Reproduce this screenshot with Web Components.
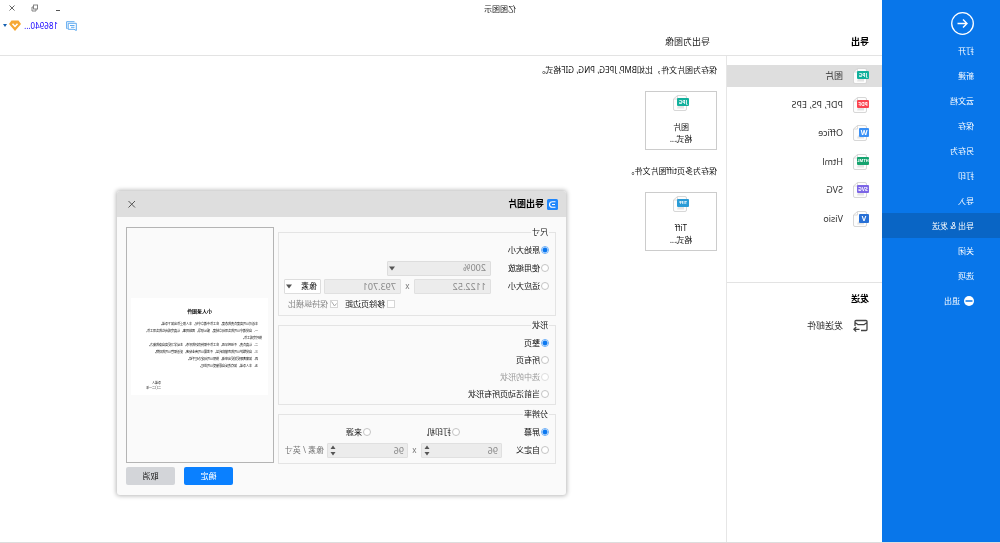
<!DOCTYPE html>
<html lang="zh-CN">
<head>
<meta charset="utf-8">
<title>亿图图示</title>
<style>
  body { margin: 0; background: #fff; font-family: "Noto Sans", "Noto Sans CJK SC", sans-serif; font-size: 8px; line-height: 12px; color: #111; }
</style>
</head>
<body>
<app-window></app-window>
<script>
const BASE = `<style>
  :host { display: block; box-sizing: border-box; }
  :host([hidden]) { display: none; }
  *, *::before { box-sizing: border-box; }
  button, input, select { font: inherit; color: inherit; margin: 0; padding: 0; border: 0; background: none; outline: 0; text-align: left; }
  h1, h2, h3, p, ul { margin: 0; padding: 0; font-size: inherit; font-weight: inherit; list-style: none; }
  a { color: inherit; text-decoration: none; }
  svg { display: block; flex: none; }
</style>`;

function define(name, render) {
  customElements.define(name, class extends HTMLElement {
    connectedCallback() {
      if (this.shadowRoot) return;
      const root = this.attachShadow({ mode: 'open' });
      const tpl = document.createElement('template');
      tpl.innerHTML = BASE + render(this);
      root.appendChild(tpl.content.cloneNode(true));
    }
  });
}
const attr = (el, n, d = '') => el.getAttribute(n) ?? d;

/* Sidebar entry */
define('nav-item', el => `<style>
  :host { height: 25px; color: #fff; }
  :host([active]) { background: #0965c5; }
  a { display: flex; align-items: center; gap: 4px; height: 100%; padding-left: 26px; }
</style><a href="#"><slot name="icon"></slot><slot></slot></a>`);

define('side-nav', () => `<style>
  :host { background: #0876ea; padding-top: 12px; }
  .back { display: block; width: 23px; height: 23px; margin: 0 0 3px 26px; }
</style>
<button class="back" aria-label="返回"><svg width="23" height="23" viewBox="0 0 23 23" fill="none" stroke="#fff" stroke-width="1.3"><circle cx="11.5" cy="11.5" r="10.8"/><path d="M16.5 11.5H7M11 7.5l-4 4 4 4" stroke-width="1.4"/></svg></button>
<nav>
  <nav-item>打开</nav-item><nav-item>新建</nav-item><nav-item>云文档</nav-item><nav-item>保存</nav-item>
  <nav-item>另存为</nav-item><nav-item>打印</nav-item><nav-item>导入</nav-item><nav-item active>导出 &amp; 发送</nav-item>
  <nav-item>关闭</nav-item><nav-item>选项</nav-item>
  <nav-item><svg slot="icon" width="10" height="10" viewBox="0 0 10 10"><circle cx="5" cy="5" r="5" fill="#fff"/><path d="M1.500 5h7" stroke="#0876ea" stroke-width="1.5"/></svg>退出</nav-item>
</nav>`);

/* Page with a coloured format badge */
define('file-icon', el => {
  const label = attr(el, 'label'), color = attr(el, 'color');
  const small = label.length === 1;
  const w = small ? 10 : 12, y = 3, h = small ? 9 : 8;
  const size = small ? 7 : label.length > 3 ? 4 : 5;
  return `<style>:host { width: 16px; height: 16px; } text { font-family: "Open Sans", sans-serif; font-weight: 700; }</style>
  <svg width="16" height="16" viewBox="0 0 16 16">
    <path d="M2.5 2q0-1.5 1.5-1.5h7.500l4 3.500V14q0 1.500-1.500 1.500H4Q2.500 15.500 2.500 14Z" fill="#fdfdfd" stroke="#d3d3d3" stroke-width=".9"/>
    <path d="M11.500.5V4H15.500" fill="none" stroke="#d3d3d3" stroke-width=".8"/>
    <path d="M5 13.500v-3h6l1 3z" fill="#e4e4e4"/>
    <rect x="0" y="${y}" width="${w}" height="${h}" rx="1" fill="${color}"/>
    <text x="${w / 2}" y="${y + h / 2 + size * .36}" font-size="${size}" text-anchor="middle" fill="#fff">${label}</text>
  </svg>`;
});

define('list-entry', () => `<style>
  :host { height: 22px; font-size: 9px; color: #333; }
  :host([selected]) { background: #dedede; }
  a { display: flex; align-items: center; gap: 10px; height: 100%; padding-left: 13px; }
</style><a href="#"><slot name="icon"></slot><slot></slot></a>`);

define('export-list', () => `<style>
  :host { border-right: 1px solid #e6e6e6; }
  .formats { display: flex; flex-direction: column; justify-content: space-between; height: 165px; margin: 9px 0 52px; }
  .send { border-top: 1px solid #e3e3e3; padding-top: 10px; }
  h2 { font-size: 9px; font-weight: 700; color: #000; padding-left: 13px; margin-bottom: 10px; }
</style>
<div class="formats">
  <list-entry selected><file-icon slot="icon" label="JPG" color="#12b09c"></file-icon>图片</list-entry>
  <list-entry><file-icon slot="icon" label="PDF" color="#fb4450"></file-icon>PDF, PS, EPS</list-entry>
  <list-entry><file-icon slot="icon" label="W" color="#3b90f5"></file-icon>Office</list-entry>
  <list-entry><file-icon slot="icon" label="HTML" color="#15a36f"></file-icon>Html</list-entry>
  <list-entry><file-icon slot="icon" label="SVG" color="#7c66e6"></file-icon>SVG</list-entry>
  <list-entry><file-icon slot="icon" label="V" color="#2870d6"></file-icon>Visio</list-entry>
</div>
<section class="send">
  <h2>发送</h2>
  <list-entry><svg slot="icon" width="16" height="14" viewBox="0 0 16 14" fill="none" stroke="#444" stroke-width="1.300"><path d="M8 11.500H3Q2 11.500 2 10.500V2.500Q2 1.500 3 1.500H13Q14 1.500 14 2.500V7M2 3.500l3 2.200h6L14 3.500M9.500 10.300H15M12.800 8l2.300 2.300-2.300 2.300"/></svg>发送邮件</list-entry>
</section>`);

define('format-card', () => `<style>
  :host { width: 72px; height: 59px; margin: 15px 0; }
  button { display: flex; flex-direction: column; align-items: center; width: 100%; height: 100%; padding-top: 3px; border: 1px solid #ccc; background: #fff; }
  .name { margin-top: 10px; }
</style><button><slot name="icon"></slot><span class="name"><slot></slot></span><span>格式...</span></button>`);

define('format-panel', () => `<style>:host { padding: 8px 0 0 9px; }</style>
<p>保存为图片文件，比如BMP, JPEG, PNG, GIF格式。</p>
<format-card><file-icon slot="icon" label="JPG" color="#12b09c"></file-icon>图片</format-card>
<p>保存为多页tiff图片文件。</p>
<format-card><file-icon slot="icon" label="TIFF" color="#2a9bd6"></file-icon>Tiff</format-card>`);

define('window-header', () => `<style>
  :host { border-bottom: 1px solid #e3e3e3; }
  .title { display: grid; grid-template-columns: 1fr 118px; align-items: center; height: 17px; text-align: center; color: #222; }
  .controls { display: flex; justify-content: flex-end; gap: 13px; padding: 0 7px 2px 0; }
  .user { display: flex; justify-content: flex-end; align-items: center; height: 17px; padding-right: 3px; color: #1500ff; }
  .name { margin: 0 3px 0 8px; width: 34px; }
  .caret { margin-left: 2px; }
  .heads { display: grid; grid-template-columns: 159px 1fr; height: 21px; padding-left: 13px; font-size: 9px; line-height: 16px; color: #222; }
  h2 { font-weight: 700; color: #000; }
</style>
<div class="title"><h1>亿图图示</h1>
  <div class="controls">
    <button aria-label="最小化"><svg width="10" height="10" viewBox="0 0 10 10" stroke="#555"><path d="M3 7.500h4"/></svg></button>
    <button aria-label="还原"><svg width="10" height="10" viewBox="0 0 10 10" fill="none" stroke="#777" stroke-width=".9"><rect x="2.500" y="2" width="4" height="4"/><path d="M4 6V8H8V4H6.500"/></svg></button>
    <button aria-label="关闭"><svg width="10" height="10" viewBox="0 0 10 10" stroke="#555" stroke-width=".9"><path d="M2.500 2.500l5 5M7.500 2.500l-5 5"/></svg></button>
  </div>
</div>
<div class="user">
  <svg width="11" height="10" viewBox="0 0 11 10" fill="none" stroke="#4da0ee" stroke-width=".9"><path d="M2.500.7H10.400V7.500H9.500M.7 2.300H8.800V8.300H3L.7 9.500ZM2.500 4.500H7M2.500 6.300H6"/></svg>
  <a class="name" href="#">186940...</a>
  <svg width="12" height="11" viewBox="0 0 12 11"><path d="M2.500.5H9.500L12 4 6 11 0 4Z" fill="#f6a833"/><path d="M3.500 3.800L6 6.500 8.500 3.800" fill="none" stroke="#fff" stroke-width="1.500"/></svg>
  <svg class="caret" width="4" height="3" viewBox="0 0 4 3"><path d="M0 0h4L2 3z" fill="#1560b0"/></svg>
</div>
<div class="heads"><h2>导出</h2><div>导出为图像</div></div>`);

/* Form parts of the dialog */
define('radio-option', el => `<style>
  label { display: flex; align-items: center; gap: 1px; white-space: nowrap; }
  :host([disabled]) { color: #999; }
  input { appearance: none; width: 8px; height: 8px; border: 1px solid #c4c4c4; border-radius: 50%; background: #fff; flex: none; }
  input:checked { border-color: #6aaef8; background: radial-gradient(circle, #0b78f0 2px, #fff 3px); }
  input:disabled { border-color: #ddd; }
</style><label><input type="radio" name="${attr(el, 'group')}" ${el.hasAttribute('checked') ? 'checked' : ''} ${el.hasAttribute('disabled') ? 'disabled' : ''}><slot></slot></label>`);

define('check-option', el => `<style>
  label { display: flex; align-items: center; gap: 2px; white-space: nowrap; }
  :host([disabled]) { color: #888; }
  input { appearance: none; width: 8px; height: 8px; border: 1px solid #d6d6d6; background: #fff; }
  .box { position: relative; display: flex; }
  svg { position: absolute; inset: 0; }
</style><label><span class="box"><input type="checkbox" ${el.hasAttribute('checked') ? 'checked' : ''} ${el.hasAttribute('disabled') ? 'disabled' : ''}>${
  el.hasAttribute('checked') ? '<svg width="8" height="8" viewBox="0 0 8 8" fill="none" stroke="#aaa"><path d="M1.500 3.500l2 2.500 3-4.500"/></svg>' : ''}</span><slot></slot></label>`);

define('value-field', el => `<style>
  :host { height: 15px; font-size: 9px; color: #888; position: relative; }
  input { width: 100%; height: 100%; padding-left: 4px; border: 1px solid #e0e0e0; background: #ececec; border-radius: 1px; }
  :host([spin]) input { padding-left: 3px; }
  svg { position: absolute; right: 3px; top: 2px; }
</style><input value="${attr(el, 'value')}" aria-label="${attr(el, 'label')}" disabled>${
  el.hasAttribute('spin') ? '<svg width="6" height="11" viewBox="0 0 6 11" fill="#555"><path d="M.5 4L3 .5 5.500 4zM.5 7L3 10.500 5.500 7z"/></svg>' : ''}`);

define('select-field', el => `<style>
  :host { height: 15px; position: relative; color: #111; }
  :host([disabled]) { color: #888; font-size: 9px; }
  select { appearance: none; width: 100%; height: 100%; padding-left: 3px; border: 1px solid #ddd; background: #fff; opacity: 1; border-radius: 1px; }
  :host([disabled]) select { background: #ececec; padding-left: 4px; }
  svg { position: absolute; right: 2px; top: 5px; }
</style><select aria-label="${attr(el, 'label')}" ${el.hasAttribute('disabled') ? 'disabled' : ''}><option>${attr(el, 'value')}</option></select>
<svg width="6" height="5" viewBox="0 0 6 5"><path d="M0 .5h6L3 4.500z" fill="#555"/></svg>`);

define('group-box', el => `<style>
  fieldset { margin: 0; min-width: 0; border: 1px solid #e4e4e4; padding: 4px 5px 2px 6px; }
  legend { padding: 0 1px; line-height: 10px; height: 10px; }
</style><fieldset><legend>${attr(el, 'legend')}</legend><slot></slot></fieldset>`);

define('document-preview', () => `<style>
  :host { height: 236px; border: 1px solid #b4b4b4; padding: 70px 4px 0 5px; font-size: 3px; line-height: 7px; color: #000; }
  article { background: #fff; height: 97px; padding: 9px 6px 0; white-space: nowrap; }
  h3 { font-size: 5px; font-weight: 700; text-align: center; line-height: 8px; margin-bottom: 6px; }
  .in { padding-left: 4px; }
  footer { line-height: 5px; padding: 11px 0 0 101px; }
</style><article>
<h3>小人录图件</h3>
<p class="in">本着对公司高度负责的态度，在工作中遵章守纪，本人郑重作出如下承诺。</p>
<p class="in">一、自觉遵守公司的各项规章制度，服从领导，团结同事，认真完成岗位的各项工作，</p>
<p>按时完成工作。</p>
<p class="in">二、认真负责，不迟到早退，在工作中保持良好的形象，主动学习提高自身的能力。</p>
<p class="in">三、自觉维护公司的声誉和利益，不泄露公司商业秘密，妥善保管公司的财物。</p>
<p class="in">四、如需离职提前提出申请，按照公司规定办理手续。</p>
<p class="in">五、本人承诺，如有违反自愿接受公司处理。</p>
<footer>承诺人<br>二〇二一年</footer>
</article>`);

define('export-dialog', () => `<style>
  :host { background: #fafafa; border-radius: 3px; box-shadow: 0 0 4px 1px rgba(0,0,0,.28); overflow: hidden; padding-bottom: 10px; }
  header { display: flex; align-items: center; gap: 3px; height: 26px; padding: 0 10px 0 8px; background: #dedede; font-size: 9px; color: #000; }
  h2 { flex: 1; font-weight: 700; }
  .body { display: grid; grid-template-columns: 1fr 148px; gap: 4px; padding: 10px 9px 0 10px; }
  .groups { display: flex; flex-direction: column; gap: 4px; }
  .row { display: flex; align-items: center; height: 18px; }
  .pages .row { height: 17px; }
  .resolution .row:last-child { margin-bottom: 2px; }
  .lead { width: 58px; }
  .lead.short { width: 47px; }
  .by { width: 13px; text-align: center; color: #777; }
  .num { width: 77px; }
  .zoom { width: 104px; }
  .unit { width: 37px; margin-left: 3px; }
  .checks { justify-content: flex-end; gap: 7px; padding-right: 4px; }
  .sources { display: grid; grid-template-columns: 89px 89px 1fr; }
  .spin { width: 81px; }
  .per { margin-left: 3px; color: #777; white-space: nowrap; }
  .actions { display: flex; justify-content: flex-end; gap: 9px; margin-top: 4px; }
  .actions button { width: 49px; height: 18px; border-radius: 2px; background: #d3d5d9; text-align: center; }
  .actions .ok { background: #0a80ff; color: #fff; }
</style>
<header>
  <svg width="11" height="11" viewBox="0 0 11 11"><rect width="11" height="11" rx="1.500" fill="#1f86fb"/><path d="M2.500 2.700H5.500Q8.500 2.700 8.500 5.500T5.500 8.300H2.500M3 5.500H6" fill="none" stroke="#fff" stroke-width="1.100"/></svg>
  <h2>导出图片</h2>
  <button aria-label="关闭"><svg width="10" height="10" viewBox="0 0 10 10" stroke="#555"><path d="M2 2l6.500 6.500M8.500 2L2 8.500"/></svg></button>
</header>
<div class="body">
  <div class="groups">
    <group-box legend="尺寸">
      <div class="row"><radio-option checked>原始大小</radio-option></div>
      <div class="row"><radio-option class="lead">使用缩放</radio-option><select-field class="zoom" label="缩放" value="200%" disabled></select-field></div>
      <div class="row"><radio-option class="lead">适应大小</radio-option><value-field class="num" label="宽" value="1122.52"></value-field><span class="by">x</span><value-field class="num" label="高" value="793.701"></value-field><select-field class="unit" label="单位" value="像素"></select-field></div>
      <div class="row checks"><check-option>移除页边距</check-option><check-option checked disabled>保持纵横比</check-option></div>
    </group-box>
    <group-box legend="形状" class="pages">
      <div class="row"><radio-option checked>整页</radio-option></div>
      <div class="row"><radio-option>所有页</radio-option></div>
      <div class="row"><radio-option disabled>选中的形状</radio-option></div>
      <div class="row"><radio-option>当前活动页所有形状</radio-option></div>
    </group-box>
    <group-box legend="分辨率" class="resolution">
      <div class="row sources"><radio-option checked>屏幕</radio-option><radio-option>打印机</radio-option><radio-option>来源</radio-option></div>
      <div class="row"><radio-option class="lead short">自定义</radio-option><value-field class="spin" label="水平" value="96" spin></value-field><span class="by">x</span><value-field class="spin" label="垂直" value="96" spin></value-field><span class="per">像素 / 英寸</span></div>
    </group-box>
  </div>
  <div>
    <document-preview></document-preview>
    <div class="actions"><button class="ok">确定</button><button>取消</button></div>
  </div>
</div>`);

/* The whole window is shown flipped left to right */
define('app-window', () => `<style>
  :host { display: grid; grid-template-columns: 118px 1fr; min-height: 100vh; position: relative; transform: scaleX(-1); border-bottom: 1px solid #ddd; overflow: hidden; }
  main { display: grid; grid-template-rows: auto 1fr; }
  .content { display: grid; grid-template-columns: 156px 1fr; }
  export-dialog { position: absolute; left: 434px; top: 191px; width: 449px; }
</style>
<side-nav></side-nav>
<main>
  <window-header></window-header>
  <div class="content"><export-list></export-list><format-panel></format-panel></div>
</main>
<export-dialog></export-dialog>`);
</script>
</body>
</html>
